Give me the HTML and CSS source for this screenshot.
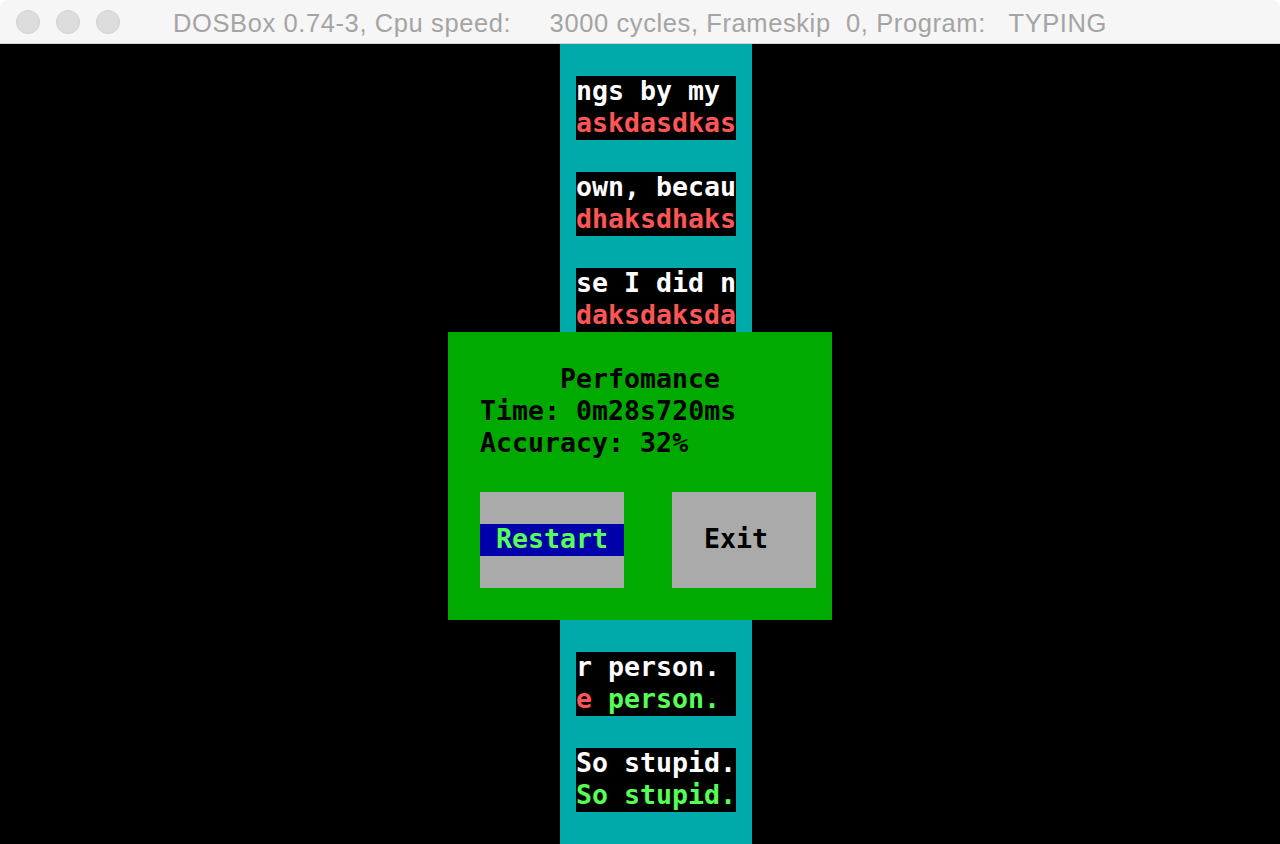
FILE: index.html
```html
<!DOCTYPE html>
<html>
<head>
<meta charset="utf-8">
<title>DOSBox</title>
<link rel="stylesheet" href="styles.css">
</head>
<body>
<div class="window">
  <header class="titlebar">
    <div class="lights">
      <span class="light"></span>
      <span class="light"></span>
      <span class="light"></span>
    </div>
    <div class="title">DOSBox 0.74-3, Cpu speed:     3000 cycles, Frameskip  0, Program:   TYPING</div>
  </header>
  <main class="screen">
    <div class="lane"></div>

    <div class="line-box box-1">
      <div class="txt white">ngs by my </div>
      <div class="txt red">askdasdkas</div>
    </div>
    <div class="line-box box-2">
      <div class="txt white">own, becau</div>
      <div class="txt red">dhaksdhaks</div>
    </div>
    <div class="line-box box-3">
      <div class="txt white">se I did n</div>
      <div class="txt red">daksdaksda</div>
    </div>
    <div class="line-box box-4">
      <div class="txt white">r person. </div>
      <div class="txt"><span class="red">e</span><span class="green"> person.</span></div>
    </div>
    <div class="line-box box-5">
      <div class="txt white">So stupid.</div>
      <div class="txt green">So stupid.</div>
    </div>

    <section class="dialog">
      <div class="txt d-title">Perfomance</div>
      <div class="txt d-time">Time: 0m28s720ms</div>
      <div class="txt d-acc">Accuracy: 32%</div>
      <div class="btn btn-restart">
        <div class="btn-band"><span class="txt">Restart</span></div>
      </div>
      <div class="btn btn-exit">
        <div class="btn-label"><span class="txt">Exit</span></div>
      </div>
    </section>
  </main>
</div>
</body>
</html>
```

FILE: styles.css
```css
* { box-sizing: border-box; }
html, body { margin: 0; padding: 0; background: #ffffff; }
body { width: 1280px; height: 844px; overflow: hidden; }

.window {
  width: 1280px;
  height: 844px;
  display: flex;
  flex-direction: column;
  border-radius: 8px 8px 0 0;
  overflow: hidden;
}

.titlebar {
  height: 44px;
  flex: 0 0 44px;
  background: #f6f6f6;
  border-bottom: 1px solid #d4d4d4;
  display: flex;
  align-items: center;
  position: relative;
}
.lights {
  display: flex;
  gap: 16px;
  padding-left: 16px;
}
.light {
  width: 24px;
  height: 24px;
  border-radius: 50%;
  background: #dddddd;
  border: 1px solid #d2d2d2;
}
.title {
  position: absolute;
  left: 0;
  right: 0;
  top: 0;
  height: 43px;
  padding-top: 1px;
  line-height: 44px;
  text-align: center;
  white-space: pre;
  font-family: "Liberation Sans", Arial, sans-serif;
  font-size: 25.5px;
  letter-spacing: 0.6px;
  color: #a4a4a4;
}

.screen {
  flex: 1 1 auto;
  background: #000000;
  display: grid;
  grid-template-columns: repeat(80, 16px);
  grid-template-rows: repeat(25, 32px);
}

.txt {
  font-family: "DejaVu Sans Mono", "Liberation Mono", monospace;
  font-weight: bold;
  font-size: 26.6px;
  line-height: 30px;
  height: 32px;
  white-space: pre;
  letter-spacing: 0;
}

.white { color: #ffffff; }
.red { color: #ff5555; }
.green { color: #55ff55; }

.lane {
  grid-column: 36 / 48;
  grid-row: 1 / 26;
  background: #00aaaa;
}

.line-box {
  grid-column: 37 / 47;
  background: #000000;
  display: flex;
  flex-direction: column;
  overflow: hidden;
}
.box-1 { grid-row: 2 / 4; }
.box-2 { grid-row: 5 / 7; }
.box-3 { grid-row: 8 / 10; }
.box-4 { grid-row: 20 / 22; }
.box-5 { grid-row: 23 / 25; }

.dialog {
  grid-column: 29 / 53;
  grid-row: 10 / 19;
  background: #00aa00;
  display: grid;
  grid-template-columns: repeat(24, 16px);
  grid-template-rows: repeat(9, 32px);
  color: #000000;
}
.d-title { grid-column: 8 / 24; grid-row: 2; }
.d-time { grid-column: 3 / 24; grid-row: 3; }
.d-acc { grid-column: 3 / 24; grid-row: 4; }

.btn {
  grid-row: 6 / 9;
  background: #aaaaaa;
  display: flex;
  flex-direction: column;
  justify-content: center;
}
.btn-restart { grid-column: 3 / 12; }
.btn-exit { grid-column: 15 / 24; }

.btn-band {
  height: 32px;
  background: #0000aa;
  color: #55ff55;
  padding-left: 16px;
}
.btn-label {
  height: 32px;
  color: #000000;
  padding-left: 32px;
}
```
